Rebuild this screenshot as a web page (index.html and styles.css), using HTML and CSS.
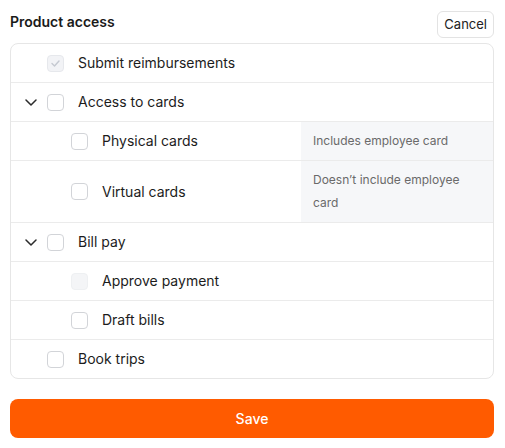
FILE: index.html
```html
<!DOCTYPE html>
<html lang="en">
<head>
<meta charset="utf-8">
<link rel="stylesheet" href="styles.css">
</head>
<body>
<div class="page">
  <div class="header">
    <h1 class="title">Product access</h1>
    <button class="cancel">Cancel</button>
  </div>
  <div class="card">
    <div class="row">
      <div class="main">
        <span class="chev-slot"></span>
        <span class="cb cb-checked-disabled"><svg viewBox="0 0 17 17" width="17" height="17"><polyline points="5,8.5 7.5,11 12,6" fill="none" stroke="#c5c9d1" stroke-width="1.4" stroke-linecap="round" stroke-linejoin="round"/></svg></span>
        <span class="label">Submit reimbursements</span>
      </div>
    </div>
    <div class="row">
      <div class="main">
        <span class="chev-slot"><svg viewBox="0 0 12 7" width="12" height="7"><polyline points="1,1 6,6 11,1" fill="none" stroke="#2b2b2b" stroke-width="1.5" stroke-linecap="round" stroke-linejoin="round"/></svg></span>
        <span class="cb"></span>
        <span class="label">Access to cards</span>
      </div>
    </div>
    <div class="row">
      <div class="main nested">
        <span class="chev-slot"></span>
        <span class="cb"></span>
        <span class="label">Physical cards</span>
      </div>
      <div class="note">Includes employee card</div>
    </div>
    <div class="row">
      <div class="main nested">
        <span class="chev-slot"></span>
        <span class="cb"></span>
        <span class="label">Virtual cards</span>
      </div>
      <div class="note">Doesn’t include employee card</div>
    </div>
    <div class="row">
      <div class="main">
        <span class="chev-slot"><svg viewBox="0 0 12 7" width="12" height="7"><polyline points="1,1 6,6 11,1" fill="none" stroke="#2b2b2b" stroke-width="1.5" stroke-linecap="round" stroke-linejoin="round"/></svg></span>
        <span class="cb"></span>
        <span class="label">Bill pay</span>
      </div>
    </div>
    <div class="row">
      <div class="main nested">
        <span class="chev-slot"></span>
        <span class="cb cb-disabled"></span>
        <span class="label">Approve payment</span>
      </div>
    </div>
    <div class="row">
      <div class="main nested">
        <span class="chev-slot"></span>
        <span class="cb"></span>
        <span class="label">Draft bills</span>
      </div>
    </div>
    <div class="row">
      <div class="main">
        <span class="chev-slot"></span>
        <span class="cb"></span>
        <span class="label">Book trips</span>
      </div>
    </div>
  </div>
  <button class="save">Save</button>
</div>
</body>
</html>
```

FILE: styles.css
```css
* { box-sizing: border-box; }
html, body { margin: 0; padding: 0; background: #fff; }
body {
  font-family: Inter, "Noto Sans", sans-serif;
  color: #1c1c1c;
  width: 505px;
}
.page {
  padding: 11px 11px 0 10px;
}
.header {
  display: flex;
  justify-content: space-between;
  align-items: center;
  height: 27px;
}
.title {
  margin: 0 0 6px 0;
  font-size: 14px;
  font-weight: 600;
  line-height: 17px;
  color: #1a1a1a;
}
.cancel {
  height: 27px;
  padding: 0 6px;
  border: 1px solid #e3e3e3;
  border-radius: 6px;
  background: #fff;
  font-family: Inter, "Noto Sans", sans-serif;
  font-size: 13px;
  color: #222;
  line-height: 1;
}
.card {
  margin-top: 5px;
  border: 1px solid #e6e6e6;
  border-radius: 8px;
  overflow: hidden;
}
.row {
  display: flex;
  align-items: stretch;
  border-top: 1px solid #ebebeb;
}
.row:first-child { border-top: none; }
.main {
  flex: 1;
  display: flex;
  align-items: center;
  min-height: 38px;
  padding-left: 14px;
}
.main.nested { padding-left: 38px; }
.chev-slot {
  width: 12px;
  height: 7px;
  display: flex;
  margin-right: 10px;
}
.chev-slot svg { display: block; }
.cb {
  width: 17px;
  height: 17px;
  border: 1px solid #d2d4d8;
  border-radius: 4px;
  background: #fff;
  margin-right: 14px;
  flex: none;
  position: relative;
}
.cb svg { position: absolute; left: -1px; top: -1px; }
.cb-checked-disabled {
  background: #f2f3f6;
  border-color: #e6e8ec;
}
.cb-disabled {
  background: #f4f5f7;
  border-color: #eef0f2;
}
.label {
  font-size: 14px;
  font-weight: 400;
  line-height: 20px;
  color: #1c1c1c;
}
.note {
  width: 192px;
  flex: none;
  background: #f6f7f9;
  padding: 7px 12px 8px;
  font-size: 12px;
  line-height: 23px;
  color: #6a6a6a;
}
.save {
  display: block;
  width: 100%;
  margin-top: 20px;
  height: 39px;
  border: none;
  border-radius: 8px;
  background: #ff5b00;
  color: #fff;
  font-family: Inter, "Noto Sans", sans-serif;
  font-size: 14px;
  font-weight: 500;
}
```
